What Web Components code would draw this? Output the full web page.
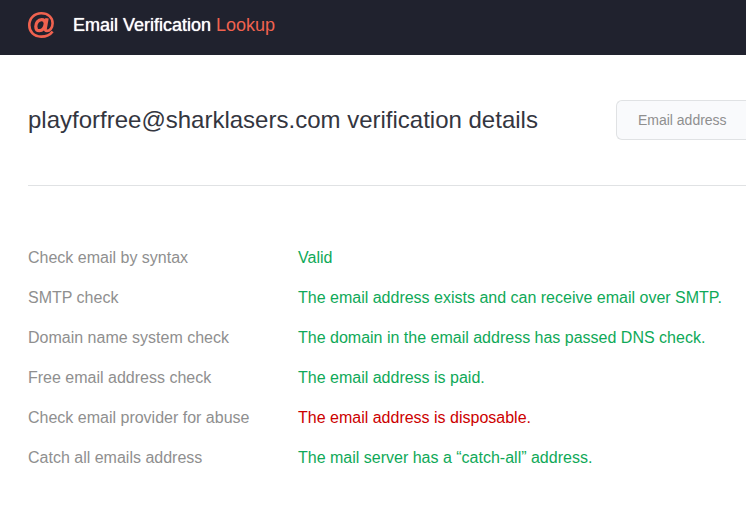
<!DOCTYPE html>
<html lang="en">
<head>
<meta charset="utf-8">
<meta name="viewport" content="width=device-width, initial-scale=1">
<title>Email Verification Lookup</title>
<style>
  body {
    margin: 0;
    background: #fff;
    color: #34363f;
    font-family: "Liberation Sans", Arial, sans-serif;
    font-size: 16px;
    --accent: #f0624f;
    --dark: #20222e;
    --line: #e0e2e4;
    --muted: #8f8f8f;
    --ok: #0fa958;
    --bad: #cc0000;
    --gutter: 28px;
  }
</style>
</head>
<body>
<site-header>Email Verification <span slot="accent">Lookup</span></site-header>
<main>
  <result-header>playforfree@sharklasers.com verification details</result-header>
  <check-list></check-list>
</main>

<script>
(function () {
  function makeTemplate(html) {
    const tmpl = document.createElement("template");
    tmpl.innerHTML = html;
    return tmpl;
  }

  const logoTmpl = makeTemplate(`
    <style>
      :host {
        display: block;
        flex: none;
        width: 26px;
        height: 26px;
        color: var(--accent);
      }
      svg {
        display: block;
        width: 100%;
        height: 100%;
      }
    </style>
    <svg viewBox="0 0 26 26" fill="none" stroke="currentColor" stroke-linejoin="round" aria-hidden="true">
      <path stroke-width="2.6" d="M24.600 19.400C22 23 18 24.600 13.200 24.600C6 24.600 1.300 19.900 1.300 13.300C1.300 6.300 6.400 1.300 13.300 1.300C20.200 1.300 24.600 5.500 24.600 11.300C24.600 16 21.700 18.900 19 18.900C17.200 18.900 16.700 18 17.100 16.200"/>
      <path stroke-width="3.4" d="M19 6.300L17 17.600"/>
      <path stroke-width="3.200" d="M17.300 11.500C17.100 9 15.700 7.600 13.600 7.600C10.100 7.600 7.800 11 7.800 14.400C7.800 17.100 9.200 18.700 11.300 18.700C14.300 18.700 16.700 16 17.300 11.500Z"/>
    </svg>
  `);

  class AtLogo extends HTMLElement {
    constructor() {
      super();
      this.attachShadow({ mode: "open" }).appendChild(logoTmpl.content.cloneNode(true));
    }
  }

  const siteTmpl = makeTemplate(`
    <style>
      :host {
        display: block;
        background: var(--dark);
      }
      header {
        display: flex;
        align-items: center;
        gap: 19px;
        padding: 11px var(--gutter) 16px;
      }
      p {
        margin: 0;
        color: #fff;
        font-size: 18px;
        line-height: 28px;
        text-shadow: 0 0 1px #fff;
      }
      ::slotted([slot="accent"]) {
        color: var(--accent);
        text-shadow: none;
      }
    </style>
    <header>
      <at-logo></at-logo>
      <p><slot></slot><slot name="accent"></slot></p>
    </header>
  `);

  class SiteHeader extends HTMLElement {
    constructor() {
      super();
      this.attachShadow({ mode: "open" }).appendChild(siteTmpl.content.cloneNode(true));
    }
  }

  const resultTmpl = makeTemplate(`
    <style>
      :host {
        display: block;
        margin-left: var(--gutter);
        padding: 45px 0;
        border-bottom: 1px solid var(--line);
      }
      .row {
        display: flex;
        align-items: center;
        gap: 78px;
      }
      h1 {
        flex: none;
        margin: 0;
        font-size: 24px;
        font-weight: 400;
        line-height: 40px;
      }
      form {
        flex: 1;
        min-width: 0;
      }
      /* the field runs up to the window edge, so it has no right side */
      input {
        box-sizing: border-box;
        display: block;
        width: 100%;
        height: 40px;
        padding: 0 0 0 21px;
        border: 1px solid var(--line);
        border-right: 0;
        border-radius: 6px 0 0 6px;
        background: #f9fafc;
        color: inherit;
        font: 14px "Liberation Sans", Arial, sans-serif;
      }
      input::placeholder {
        color: var(--muted);
      }
    </style>
    <div class="row">
      <h1><slot></slot></h1>
      <form>
        <input id="email" name="email" type="email" placeholder="Email address" aria-label="Email address">
      </form>
    </div>
  `);

  class ResultHeader extends HTMLElement {
    constructor() {
      super();
      this.attachShadow({ mode: "open" }).appendChild(resultTmpl.content.cloneNode(true));
    }
  }

  const listTmpl = makeTemplate(`
    <style>
      :host {
        display: block;
        padding: 52px 0 36px var(--gutter);
      }
      table {
        width: 100%;
        border-collapse: collapse;
        table-layout: fixed;
      }
      th, td {
        padding: 10px 0;
        font-weight: 400;
        line-height: 20px;
        text-align: left;
        vertical-align: top;
      }
      th {
        width: 270px;
        color: var(--muted);
      }
      td {
        color: var(--ok);
      }
      td.bad {
        color: var(--bad);
      }
    </style>
    <table><tbody></tbody></table>
  `);

  const checks = [
    { name: "Check email by syntax", result: "Valid" },
    { name: "SMTP check", result: "The email address exists and can receive email over SMTP." },
    { name: "Domain name system check", result: "The domain in the email address has passed DNS check." },
    { name: "Free email address check", result: "The email address is paid." },
    { name: "Check email provider for abuse", result: "The email address is disposable.", bad: true },
    { name: "Catch all emails address", result: "The mail server has a “catch-all” address." },
  ];

  class CheckList extends HTMLElement {
    constructor() {
      super();
      this.attachShadow({ mode: "open" }).appendChild(listTmpl.content.cloneNode(true));
      this.render();
    }

    render() {
      const body = this.shadowRoot.querySelector("tbody");
      checks.forEach((check) => {
        const row = body.insertRow();
        const head = document.createElement("th");
        head.scope = "row";
        head.textContent = check.name;
        row.appendChild(head);
        const cell = row.insertCell();
        cell.textContent = check.result;
        if (check.bad) {
          cell.className = "bad";
        }
      });
    }
  }

  customElements.define("at-logo", AtLogo);
  customElements.define("site-header", SiteHeader);
  customElements.define("result-header", ResultHeader);
  customElements.define("check-list", CheckList);
})();
</script>
</body>
</html>
